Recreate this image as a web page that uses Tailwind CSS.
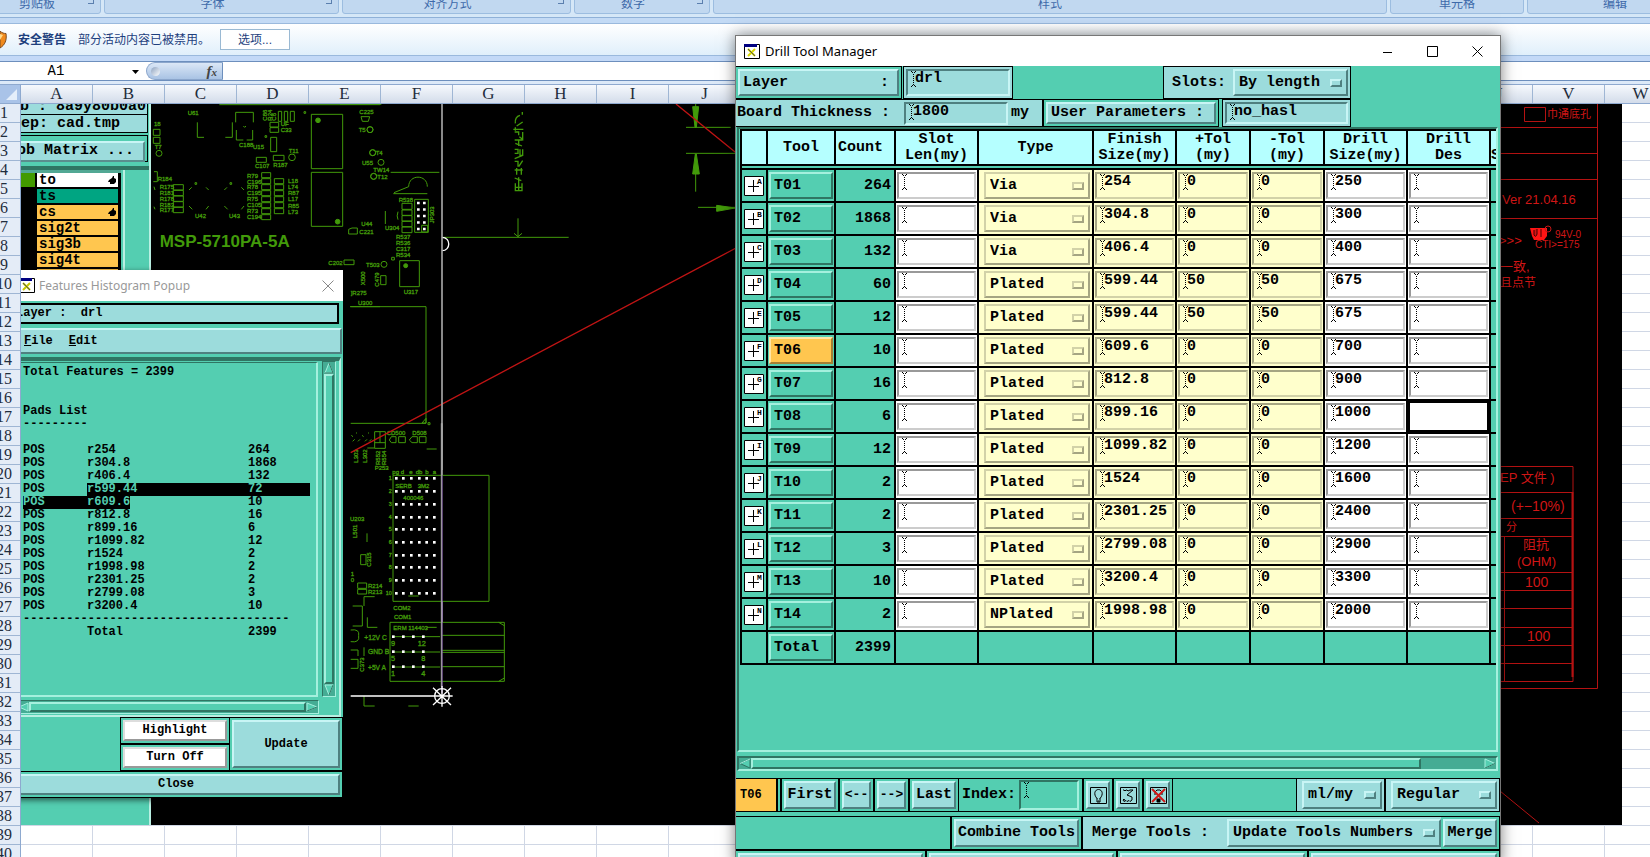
<!DOCTYPE html>
<html lang="zh-CN">
<head>
  <meta charset="utf-8" />
  <title>Drill Tool Manager</title>
  <script src="https://cdn.jsdelivr.net/npm/@tailwindcss/browser@4"></script>
</head>
<body class="relative h-screen flex flex-col overflow-hidden bg-white text-black font-['Liberation_Sans','Noto_Sans_CJK_SC',sans-serif]">

  <!-- Ribbon group captions -->
  <div class="shrink-0 h-[18px] flex gap-[3px] overflow-hidden bg-[#d5e7f7] border-b border-[#8fb1d8] text-[12px] text-[#3e6aaa]">
    <div class="shrink-0 w-[110px] -ml-[9px] h-[21px] -mt-[7px] flex items-center justify-center pr-[18px] relative rounded-b-[3px] border border-[#9cbde0] bg-[#c1d8f0]">剪贴板<i class="absolute right-[6px] bottom-[9px] size-[6px] border-r border-b border-[#5b7fae]"></i></div>
    <div class="shrink-0 w-[235px] h-[21px] -mt-[7px] flex items-center justify-center pr-[18px] relative rounded-b-[3px] border border-[#9cbde0] bg-[#c1d8f0]">字体<i class="absolute right-[6px] bottom-[9px] size-[6px] border-r border-b border-[#5b7fae]"></i></div>
    <div class="shrink-0 w-[229px] h-[21px] -mt-[7px] flex items-center justify-center pr-[18px] relative rounded-b-[3px] border border-[#9cbde0] bg-[#c1d8f0]">对齐方式<i class="absolute right-[6px] bottom-[9px] size-[6px] border-r border-b border-[#5b7fae]"></i></div>
    <div class="shrink-0 w-[136px] h-[21px] -mt-[7px] flex items-center justify-center pr-[18px] relative rounded-b-[3px] border border-[#9cbde0] bg-[#c1d8f0]">数字<i class="absolute right-[6px] bottom-[9px] size-[6px] border-r border-b border-[#5b7fae]"></i></div>
    <div class="flex-1 h-[21px] -mt-[7px] flex items-center justify-center rounded-b-[3px] border border-[#9cbde0] bg-[#c1d8f0]">样式</div>
    <div class="shrink-0 w-[134px] h-[21px] -mt-[7px] flex items-center justify-center rounded-b-[3px] border border-[#9cbde0] bg-[#c1d8f0]">单元格</div>
    <div class="shrink-0 w-[176px] -mr-[53px] h-[21px] -mt-[7px] flex items-center justify-center rounded-b-[3px] border border-[#9cbde0] bg-[#c1d8f0]">编辑</div>
  </div>
  <div class="shrink-0 h-[5px] bg-[#c3daf5]"></div>

  <!-- Security warning -->
  <div class="shrink-0 h-[33px] flex items-center border-y border-[#9ab9dd] bg-linear-to-b from-white to-[#e0effb] text-[12px] text-[#1e3f7d]">
    <svg class="w-[7px] h-[18px]" viewBox="0 0 7 18"><path d="M0 0C2 2 4 2.500 6 2.500C7 9 5 14 0 17Z" fill="#f08a1d" stroke="#7b4a20" /><path d="M0 3 3 4 0 9Z" fill="#ffd98a" /></svg>
    <b class="ml-[11px]">安全警告</b>
    <span class="ml-[12px]">部分活动内容已被禁用。</span>
    <button class="ml-[10px] w-[70px] h-[21px] border border-[#9ab9d3] bg-white">选项...</button>
  </div>
  <div class="shrink-0 h-[5px] bg-[#c3d9f7]"></div>

  <!-- Formula bar -->
  <div class="shrink-0 h-[20px] flex border-y border-[#6d8fbd] bg-white">
    <input aria-label="Name box" value="A1" class="w-[112px] text-center text-[14px] font-['Liberation_Mono',monospace]" />
    <svg class="mt-[7px] ml-[19px] w-[9px] h-[6px]" viewBox="0 0 9 6"><path d="M1 1h7L4.500 5Z" /></svg>
    <div class="ml-[6px] w-[77px] flex items-center justify-between pl-[4px] pr-[5px] rounded-l-full border border-r-[#6d8fbd] border-[#8ba6cc] bg-linear-to-b from-[#dbe7f6] to-[#a9c3e4]">
      <i class="size-[9px] rounded-full bg-linear-to-br from-[#8ea3c0] to-white"></i>
      <i class="font-['Liberation_Serif',serif] text-[15px] leading-[16px] font-bold text-[#444]">f<span class="text-[11px]">x</span></i>
    </div>
    <input aria-label="Formula" class="flex-1 min-w-0" />
  </div>
  <div class="shrink-0 h-[3px] bg-[#dce9f8]"></div>

  <!-- Worksheet -->
  <div class="shrink-0 h-[20px] flex overflow-hidden border-y border-[#8ea9cf] bg-linear-to-b from-[#f6f9fd] to-[#d3dcea] text-[17px] text-[#1f2d3d] font-['Liberation_Serif',serif]" id="colHeads">
    <div class="shrink-0 w-[21px] flex items-end justify-end p-[3px] border-r border-[#8ea9cf] bg-[#a9c3e8]"><svg class="size-[11px]" viewBox="0 0 11 11"><path d="M11 0V11H0Z" fill="#e4eefa" /></svg></div>
  </div>
  <div class="flex-1 min-h-0 flex">
    <div class="shrink-0 w-[21px] overflow-hidden border-r border-[#8ea9cf] bg-[#e4ecf7] text-[16px] text-[#1f2d3d] font-['Liberation_Serif',serif]" id="rowHeads"></div>

    <div class="relative flex-1 min-w-0 overflow-hidden bg-[linear-gradient(transparent_18px,#d0d7e5_18px),linear-gradient(90deg,transparent_71px,#d0d7e5_71px)] bg-[size:72px_19px]">

      <!-- Board picture on the sheet -->
      <div class="relative w-[1601px] h-[721px] overflow-hidden bg-black">
        <svg class="absolute inset-0 size-full" viewBox="21 104 1601 721" fill="none" font-family="Liberation Sans, Noto Sans CJK SC, sans-serif">
          <!-- upper left part of the board -->
          <svg x="0" y="90" width="380" height="330" viewBox="0 0 1140 990" stroke="#429a0a" stroke-width="3">
            <path d="M658 44H1140M592 97V142H612M676 142H697V97M707 97V67H760V97M709 120V150H730M740 150H758V120M730 108l4 4 4-4M934 73H1028V236H934ZM934 247H1028V409H934ZM462 245H472V275H460M460 118h20v18h-20zM460 142h20v18h-20zM810 97h26v14h-26zM810 113h26v14h-26zM812 142h18v43h-18zM769 202h30v15h-30zM820 196h32v16h-32zM835 64h10v30h-10zM853 64h10v30h-10zM871 64h12v30h-12z" />
            <path d="M520 284h30v16h-30zM520 301h30v16h-30zM520 318h30v16h-30zM520 335h30v16h-30zM520 352h30v16h-30zM785 248h27v15h-27zM785 266h27v15h-27zM785 284h27v15h-27zM785 302h27v15h-27zM785 320h27v15h-27zM785 338h27v15h-27zM785 356h27v15h-27zM785 374h27v15h-27zM823 266h28v15h-28zM823 284h28v15h-28zM823 302h28v15h-28zM823 320h28v15h-28zM823 338h28v15h-28zM823 356h28v15h-28z" />
            <path d="M567 300l8-8M618 292l8 8M567 348l10 10M626 348l-8 10M673 300l8-8M724 292l8 8M673 348l10 10M732 348l-8 10M1083 80h26l-4 14h-18zM1046 418l10-4h16v18h-26zM1032 510h30v14h-30zM585 278h5v5h-5zM690 278h5v5h-5zM795 137h5v5h-5zM912 65h5v5h-5zM462 290l3 10M462 350l3 8M1050 650h90" />
            <circle cx="477" cy="190" r="9" /><circle cx="876" cy="202" r="10" /><circle cx="1110" cy="119" r="9" /><circle cx="1118" cy="188" r="9" /><circle cx="1121" cy="259" r="9" />
            <circle cx="954" cy="91" r="7" fill="#429a0a" /><circle cx="1013" cy="395" r="7" fill="#429a0a" />
            <g fill="#429a0a" stroke-width="1" font-size="18">
              <text x="563" y="74">U61</text><text x="462" y="108">18</text><text x="464" y="176">T7</text><text x="842" y="108">UF</text><text x="842" y="127">C33</text><text x="717" y="171">C188</text><text x="759" y="177">U15</text><text x="866" y="188">T11</text><text x="765" y="235">C107</text><text x="820" y="230">R187</text>
              <text x="473" y="273">R184</text><text x="479" y="298">R175</text><text x="479" y="315">R181</text><text x="479" y="333">R178</text><text x="479" y="350">R183</text><text x="479" y="367">R177</text><text x="585" y="383">U42</text><text x="687" y="383">U43</text>
              <text x="741" y="263">R79</text><text x="741" y="281">C196</text><text x="741" y="298">R78</text><text x="741" y="316">C195</text><text x="741" y="334">R75</text><text x="741" y="352">C105</text><text x="741" y="370">R73</text><text x="741" y="388">C194</text>
              <text x="864" y="278">L18</text><text x="864" y="298">L74</text><text x="864" y="315">R87</text><text x="864" y="334">L17</text><text x="864" y="353">R85</text><text x="864" y="371">L73</text>
              <text x="1078" y="72">C225</text><text x="1076" y="125">T5</text><text x="1086" y="225">U55</text><text x="1084" y="407">U44</text><text x="1078" y="431">C221</text><text x="985" y="524">C202</text><text x="1098" y="531">T503</text>
              <text x="800" y="92" transform="rotate(-90 800 92)">C86</text><text x="816" y="92" transform="rotate(-90 816 92)">R24</text><text x="829" y="92" transform="rotate(-90 829 92)">C6</text><text x="1096" y="586" transform="rotate(-90 1096 586)">X500</text>
              <text x="1052" y="616">]R275</text><text x="1074" y="645">U300</text>
            </g>
            <text x="479" y="472" font-size="51" font-weight="bold" fill="#429a0a" stroke="none">MSP-5710PA-5A</text>
          </svg>

          <!-- upper middle part -->
          <svg x="340" y="90" width="400" height="380" viewBox="0 0 1200 1140" stroke="#429a0a" stroke-width="3">
            <path d="M0 43H124M152 247H298M160 311H262M162 308L206 290C206 252 262 252 262 290M136 363V402M174 365q-5 13 0 24M186 340h30v18h-30zM186 360h30v16h-30zM186 377h30v16h-30zM186 394h30v16h-30zM186 411h30v17h-30zM224 328h41v99h-41zM245 406h18v20h-18zM179 512h59v78h-59zM122 557h16v27h-16zM155 502h8v8h-8zM32 650H258V1000H32M258 985l-12 14h12zM264 998h6v6h-6z" />
            <path d="M104 1025h32v50h-32zM104 1058h32M120 1025v33M148 1050l6-10h14v18h-14zM176 1040h20v18h-20zM208 1050l8-10h16v18h-16zM238 1040h20v18h-20zM260 1077H290M82 1074H104M34 1036l5 4M66 1036l5 4M48 1028l3 2M84 1028l3 2M38 1054l6-6M54 1054l6-6M75 1054l6-6M88 1054l6-6" />
            <path d="M309 442H686M534 385V440M522 430l12 10 12-10M1038 112H1172M1038 190H1188M1067 42V110M1067 195V305M1074 352H1188" />
            <path d="M1058 50h18l-7 62h-4zM1066 192h3l9 60h-20zM1130 346l56 8-56 10z" fill="#429a0a" />
            <path d="M547 66v8M520 118h30M526 112v10M540 76q-16 4-14 24M548 96l-18 12M524 126h12v10M548 126v22l-10-8M524 150h24M526 160l20 8M536 152v16M524 178h10v12h-10M540 178v18h8v-18M524 206l24-10M524 214h10v16M548 212l-12 18M524 240h24M530 234v20M544 234v20M524 264l20 8M526 280v22M536 262v40M546 280v22M524 302h24M526 292h20" stroke-width="4" />
            <circle cx="90" cy="119" r="9" /><circle cx="98" cy="188" r="9" /><circle cx="123" cy="217" r="9" /><circle cx="101" cy="259" r="9" /><circle cx="132" cy="523" r="9" /><circle cx="197" cy="527" r="6" fill="#429a0a" />
            <g fill="#429a0a" stroke-width="1" font-size="18">
              <text x="107" y="196">T4</text><text x="100" y="245">TW14</text><text x="112" y="266">T12</text><text x="176" y="336">R538</text><text x="135" y="420">U304</text><text x="168" y="446">R537</text><text x="168" y="464">R536</text><text x="168" y="482">C317</text><text x="168" y="500">R534</text><text x="191" y="612">U317</text><text x="140" y="1035">CD500</text><text x="217" y="1035">D508</text><text x="104" y="1139">P253</text>
              <text x="282" y="400" transform="rotate(-90 282 400)">JP303</text><text x="118" y="590" transform="rotate(-90 118 590)">C479</text><text x="54" y="1118" transform="rotate(-90 54 1118)">L303</text><text x="80" y="1118" transform="rotate(-90 80 1118)">L302</text><text x="120" y="1125" transform="rotate(-90 120 1125)">R552</text><text x="139" y="1125" transform="rotate(-90 139 1125)">R554</text>
            </g>
            <g stroke="#fff" stroke-width="8" stroke-dasharray="8 11.500"><path d="M235 335V425M253 335V425" /></g>
            <g stroke="#c01414" stroke-width="4"><path d="M1008 42 1188 188M1188 474 32 1088" /></g>
            <path d="M306 442C333 442 333 482 306 482" stroke="#fff" stroke-width="4" />
            <path d="M306 42V1140" stroke="#a5a5a5" stroke-width="5" />
          </svg>

          <!-- connectors at the bottom of the board -->
          <svg x="340" y="400" width="300" height="320" viewBox="0 0 900 960" stroke="#429a0a" stroke-width="3">
            <path d="M159 226H447V604H159ZM150 667H493V844H150ZM159 710H300M159 756H300M159 801H300M306 706H493M306 751H493M306 757H493M306 800H493M476 667l17 10M476 844l17-10M260 682H290M205 588H236M72 618V590H104M38 618H67V678H38M82 652V682H112M32 690q28-4 24 17q4 22-24 18M32 750H54V768M72 742V768M32 778H54V805H32M72 888V918H104M205 918H236M81 400V426M62 464h16v30h-16zM53 549h27v16h-27zM53 568h27v14h-27z" />
            <g fill="#429a0a" stroke-width="1" font-size="18">
              <text x="157" y="221">pg d</text><text x="208" y="221">e</text><text x="227" y="221">db</text><text x="256" y="221">b</text><text x="278" y="221">a</text><text x="166" y="263">SERB</text><text x="233" y="263">3M2</text><text x="190" y="301">400046</text>
              <text x="30" y="362">U203</text><text x="160" y="629">COM2</text><text x="162" y="658">COM1</text><text x="160" y="691">ERM 114403</text><text x="84" y="563">R214</text><text x="84" y="582">R213</text><text x="32" y="546">0</text><text x="32" y="527">1</text>
              <text x="50" y="414" transform="rotate(-90 50 414)">L501</text><text x="94" y="500" transform="rotate(-90 94 500)">C315</text><text x="73" y="815" transform="rotate(-90 73 815)">C373</text>
            </g>
            <g fill="#429a0a" stroke-width="1" font-size="16" id="pinRows"></g>
            <g fill="#429a0a" stroke-width="1" font-size="22">
              <text x="153" y="739">9</text><text x="233" y="739">12</text><text x="153" y="784">5</text><text x="244" y="784">8</text><text x="153" y="829">1</text><text x="244" y="829">4</text>
              <text x="73" y="721" font-size="20">+12V C</text><text x="84" y="763" font-size="20">GND B</text><text x="84" y="809" font-size="20">+5V A</text>
            </g>
            <g fill="#fff" stroke="none" id="pins"></g>
            <path d="M306 70V226M306 604V667" stroke="#a5a5a5" stroke-width="5" />
            <path d="M306 226V880" stroke="#8d6ab0" stroke-width="4" />
            <path d="M304 70V860" stroke="#a5a5a5" stroke-width="3" />
            <g stroke="#fff" stroke-width="4"><path d="M32 888H338M306 858V920M279 863 333 915M333 863 279 915" /><circle cx="306" cy="888" r="22" /></g>
          </svg>

          <!-- drawing frame right of the tool window -->
          <g stroke="#b51212" stroke-width="1">
            <path d="M1597.500 104V688.500H1500M1500 127.500H1597M1500 153.500H1597M1500 179.500H1597M1500 218.500H1597M1524.500 107.500h21v14h-21z" />
            <path d="M1500 466.500H1573V492M1500 492.500H1573M1500 518.500H1573M1500 536.500H1573M1500 572.500H1573M1500 590.500H1573M1500 608.500H1573M1500 627.500H1573M1500 645.500H1573M1500 663.500H1573M1500 681.500H1573V492M1504.500 536V681M1500 791 1539 823" />
            <path d="M1572.500 492V677" stroke-width="2" />
          </g>
          <g fill="#d01616">
            <text x="1547" y="118" font-size="11">巾通底孔</text>
            <text x="1502" y="204" font-size="13">Ver 21.04.16</text>
            <text x="1499" y="245" font-size="13">&gt;&gt;&gt;</text>
            <path d="M1530 228h17v8l-3 4h-10l-2-4z" fill="#ff1414" /><path d="M1534 230v5q2 3 3-1v-5M1541 229v8" stroke="#400" />
            <circle cx="1548" cy="229" r="3" stroke="#c41616" fill="none" />
            <text x="1555" y="238" font-size="10">94V-0</text>
            <text x="1535" y="248" font-size="10">CTI&gt;=175</text>
            <text x="1500" y="271" font-size="13">一致,</text>
            <text x="1500" y="287" font-size="12">且点节</text>
            <text x="1500" y="482" font-size="13">EP 文件 )</text>
            <text x="1511" y="511" font-size="14">(+−10%)</text>
            <text x="1506" y="531" font-size="11">分</text>
            <text x="1523" y="549" font-size="13">阻抗</text>
            <text x="1517" y="566" font-size="13">(OHM)</text>
            <text x="1525" y="587" font-size="14">100</text>
            <text x="1527" y="641" font-size="14">100</text>
          </g>
        </svg>

        <!-- Layer panel of the CAM program -->
        <div class="absolute left-0 top-0 w-[130px] h-full bg-[#54ceb1] border-r-2 border-[#b9efe2] overflow-hidden whitespace-nowrap font-['Liberation_Mono',monospace] font-bold">
          <div class="mr-px h-[10px] flex items-end justify-end bg-[#9cdcdc] border-r border-black text-[15px] leading-[14px] pr-px">b : 8a9y80b0a0</div>
          <div class="mr-px h-[19px] flex items-center bg-[#9cdcdc] border-y border-r border-black text-[15px] leading-[16px]">ep: cad.tmp</div>
          <div class="mt-[2px] mr-px h-[27px] p-[2px] pl-0 border-y border-r border-black">
            <button class="w-full h-full text-left -indent-[4px] bg-[#9cdcdc] border-2 border-l-0 border-t-[#c8f5f5] border-r-[#5a8e8e] border-b-[#5a8e8e] text-[15px] leading-[16px]">ob Matrix ...</button>
          </div>
          <div class="mt-[4px] h-[4px] bg-[#2f7563]"></div>
          <div class="flex">
            <div class="w-[100px] h-[120px] bg-black border-t-[3px] border-[#52a894] text-[14px] leading-[14px]">
              <div class="flex h-[16px]"><i class="w-[14px] h-[14px] mr-[2px] bg-[#429a00]"></i><span class="flex w-[81px] h-[14px] pl-[2px] pr-[2px] items-center justify-between bg-white">to<svg class="w-[8px] h-[8px]" viewBox="0 0 8 8"><path d="M1 4l3-2 1-2h1v2l2 1v3L6 8H2V6H0z" /></svg></span></div>
              <div class="ml-[16px] mb-[2px] w-[81px] h-[14px] pl-[2px] bg-[#00a582]">ts</div>
              <div class="ml-[16px] mb-[2px] w-[81px] h-[14px] pl-[2px] pr-[2px] flex items-center justify-between bg-[#ffc64f]">cs<svg class="w-[8px] h-[8px]" viewBox="0 0 8 8"><path d="M1 4l3-2 1-2h1v2l2 1v3L6 8H2V6H0z" /></svg></div>
              <div class="ml-[16px] mb-[2px] w-[81px] h-[14px] pl-[2px] bg-[#ffc64f]">sig2t</div>
              <div class="ml-[16px] mb-[2px] w-[81px] h-[14px] pl-[2px] bg-[#ffc64f]">sig3b</div>
              <div class="ml-[16px] mb-[2px] w-[81px] h-[14px] pl-[2px] bg-[#ffc64f]">sig4t</div>
              <div class="ml-[16px] w-[81px] h-[14px] bg-[#ffc64f]"></div>
            </div>
            <i class="ml-[2px] w-[2px] h-[120px] bg-[#b9efe2]"></i>
          </div>
        </div>

        <!-- Features Histogram Popup -->
        <section class="absolute -left-[8px] top-[166px] w-[330px] bg-[#54ceb1] shadow-[0_2px_6px_rgba(0,0,0,0.6)] font-['Liberation_Mono',monospace] font-bold text-[12px] leading-[13px]">
          <header class="h-[31px] flex items-center bg-white pl-[6px] pr-[9px] font-['Noto_Sans',sans-serif] font-normal text-[#999]">
            <svg class="w-[16px] h-[15px]" viewBox="0 0 16 15"><path d="M.5.500h15v14H.5z" fill="#fff" stroke="#000" /><path d="M0 0h13v3H0z" fill="#000080" /><path d="M4 5l7 7M11 5 4 12" stroke="#c8c800" stroke-width="2" /><path d="M4 5l7 7" stroke="#555" /></svg>
            <span class="ml-[4px] text-[12px]">Features Histogram Popup</span>
            <button class="ml-auto" aria-label="Close"><svg class="size-[12px]" viewBox="0 0 12 12"><path d="M.5.500l11 11M11.500.500l-11 11" stroke="#888" /></svg></button>
          </header>
          <div class="mt-[2px] mr-[4px] h-[21px] flex items-center border-2 border-black bg-[#9cdcdc] pl-px whitespace-pre">Layer :  drl</div>
          <div class="mt-[4px] h-[26px] mr-px flex items-center gap-[16px] pl-[11px] bg-[#9cdcdc] border-2 border-t-[#c8f5f5] border-l-0 border-r-[#4f8080] border-b-[#4f8080]">
            <button class="first-letter:underline">File</button>
            <button class="first-letter:underline">Edit</button>
          </div>
          <div class="mt-[3px] mr-[2px] border-t-4 border-r-2 border-b-2 border-t-[#2f7563] border-r-[#b9efe2] border-b-[#b9efe2] pr-[3px]">
            <div class="flex">
              <div class="w-[305px] h-[335px] mt-[1px] pt-[3px] pl-[10px] border-t border-r-2 border-b-2 border-t-[#2f7563] border-r-[#a5f0de] border-b-[#a5f0de]">
                <p>Total Features = 2399</p>
                <p class="mt-[26px]">Pads List</p>
                <p>---------</p>
                <table class="mt-[13px] table-fixed w-[287px] border-collapse">
                  <colgroup><col class="w-[64px]" /><col class="w-[161px]" /><col /></colgroup>
                  <tbody id="pads"></tbody>
                </table>
                <p>-------------------------------------</p>
                <p class="flex"><span class="w-[161px] ml-[64px]">Total</span>2399</p>
              </div>
              <div class="ml-auto w-[14px] h-[336px] flex flex-col items-center bg-[#45ac94] border border-t-[#2f7563] border-l-[#2f7563] border-r-[#a5f0de] border-b-[#a5f0de]">
                <svg class="w-[10px] h-[12px]" viewBox="0 0 10 12"><path d="M5 1 9 11H1Z" fill="#54ceb1" stroke="#a5f0de" /><path d="M5 1 9 11H1" fill="none" stroke="#2f7563" /></svg>
                <i class="flex-1 w-[10px] bg-[#54ceb1] border-2 border-t-[#a5f0de] border-l-[#a5f0de] border-r-[#2f7563] border-b-[#2f7563]"></i>
                <svg class="w-[10px] h-[12px]" viewBox="0 0 10 12"><path d="M5 11 9 1H1Z" fill="#54ceb1" stroke="#a5f0de" /><path d="M5 11 9 1" stroke="#2f7563" /></svg>
              </div>
            </div>
            <div class="mt-[3px] mb-px w-[306px] h-[14px] flex items-center pl-[5px] bg-[#45ac94] border border-t-[#2f7563] border-l-0 border-r-[#a5f0de] border-b-[#a5f0de]">
              <svg class="w-[11px] h-[10px]" viewBox="0 0 11 10"><path d="M1 5 10 1V9Z" fill="#54ceb1" stroke="#a5f0de" /></svg>
              <i class="flex-1 h-[10px] bg-[#54ceb1] border-2 border-t-[#a5f0de] border-l-[#a5f0de] border-r-[#2f7563] border-b-[#2f7563]"></i>
              <svg class="w-[12px] h-[10px]" viewBox="0 0 12 10"><path d="M11 5 1 1V9Z" fill="#54ceb1" stroke="#a5f0de" /><path d="M1 9 11 5" stroke="#2f7563" /></svg>
            </div>
          </div>
          <div class="flex h-[54px] justify-end">
            <div class="w-[110px] flex flex-col border border-black">
              <div class="flex-1 p-[2px]"><button class="size-full bg-white border-2 border-t-[#ddd] border-l-[#ddd] border-r-[#999] border-b-[#999]">Highlight</button></div>
              <div class="flex-1 p-[2px] border-t-2 border-black"><button class="size-full bg-white border-2 border-t-[#ddd] border-l-[#ddd] border-r-[#999] border-b-[#999]">Turn Off</button></div>
            </div>
            <div class="w-[113px] p-[2px] border border-l-0 border-black"><button class="size-full bg-[#9cdcdc] border-2 border-t-[#c8f5f5] border-l-[#c8f5f5] border-r-[#4f8080] border-b-[#4f8080]">Update</button></div>
          </div>
          <div class="h-[27px] p-[2px] border border-black"><button class="size-full pr-[4px] bg-[#9cdcdc] border-2 border-t-[#c8f5f5] border-l-[#c8f5f5] border-r-[#4f8080] border-b-[#4f8080]">Close</button></div>
        </section>
      </div>
    </div>
  </div>

  <!-- Drill Tool Manager -->
  <main class="absolute left-[735px] top-[35px] w-[766px] h-[830px] bg-[#54ceb1] border border-[#777] shadow-[0_0_14px_rgba(0,0,0,0.5)] font-['Liberation_Mono',monospace] font-bold text-[15px] leading-[16px] whitespace-nowrap">
    <header class="h-[30px] flex items-center bg-white pl-[8px] pr-[17px] font-['Noto_Sans',sans-serif] font-normal text-[13px]">
      <svg class="w-[16px] h-[15px]" viewBox="0 0 16 15"><path d="M.5.500h15v14H.5z" fill="#fff" stroke="#000" /><path d="M0 0h13v3H0z" fill="#000080" /><path d="M4 5l7 7M11 5 4 12" stroke="#d8d800" stroke-width="2" /><path d="M4 5l7 7" stroke="#555" /></svg>
      <span class="ml-[5px]">Drill Tool Manager</span>
      <div class="ml-auto flex items-center gap-[34px]">
        <button aria-label="Minimize"><svg class="size-[11px]" viewBox="0 0 11 11"><path d="M1 6.500h9" stroke="#000" /></svg></button>
        <button aria-label="Maximize"><svg class="size-[11px]" viewBox="0 0 11 11"><path d="M.5.500h10v10H.5z" fill="none" stroke="#000" /></svg></button>
        <button aria-label="Close"><svg class="size-[11px]" viewBox="0 0 11 11"><path d="M.5.500l10 10M10.500.500l-10 10" stroke="#000" /></svg></button>
      </div>
    </header>

    <div class="h-[33px] flex">
      <div class="w-[166px] p-[2px] border border-l-0 border-black"><button class="size-full flex items-center gap-[92px] pl-[3px] bg-[#9cdcdc] border-2 border-t-[#c8f5f5] border-l-[#c8f5f5] border-r-[#4f8080] border-b-[#4f8080]"><span>Layer</span>:</button></div>
      <div class="ml-px w-[110px] p-[2px] border border-black bg-[#9cdcdc]">
        <div class="size-full flex items-start border-2 border-t-[#4f8080] border-l-[#4f8080] border-r-[#c8f5f5] border-b-[#c8f5f5] pl-[3px]">
          <svg class="shrink-0 w-[5px] h-[16px]" viewBox="0 0 5 16"><path d="M0 .5h1m3 0h1M1 1.500h1m1 0h1M1 14.500h1m1 0h1M0 15.500h1m3 0h1M2.500 3V14" stroke="#000" stroke-dasharray="1 1" /></svg>
          <input aria-label="Layer name" value="drl" class="-ml-px w-full h-[16px] min-w-0" />
        </div>
      </div>
      <label class="ml-[150px] w-[188px] flex items-center p-[2px] pl-[8px] border border-black bg-[#9cdcdc]">Slots:
        <span class="ml-auto w-[115px] h-full flex items-center px-[4px] border-2 border-t-[#c8f5f5] border-l-[#c8f5f5] border-r-[#4f8080] border-b-[#4f8080]">
          <select class="flex-1 min-w-0 appearance-none"><option>By length</option></select>
          <i class="w-[12px] h-[8px] border-2 border-t-[#c8f5f5] border-l-[#c8f5f5] border-r-[#4f8080] border-b-[#4f8080]"></i>
        </span>
      </label>
    </div>
    <div class="h-[28px] flex">
      <div class="w-[307px] flex items-center pl-px border border-l-0 border-black bg-[#9cdcdc]">
        <label for="thickness">Board Thickness :</label>
        <div class="ml-[14px] w-[104px] h-[23px] flex items-start border-2 border-t-[#4f8080] border-l-[#4f8080] border-r-[#c8f5f5] border-b-[#c8f5f5] pl-[3px]">
          <svg class="shrink-0 w-[5px] h-[16px]" viewBox="0 0 5 16"><path d="M0 .5h1m3 0h1M1 1.500h1m1 0h1M1 14.500h1m1 0h1M0 15.500h1m3 0h1M2.500 3V14" stroke="#000" stroke-dasharray="1 1" /></svg>
          <input id="thickness" value="1800" class="-ml-px w-full h-[16px] min-w-0" />
        </div>
        <span class="ml-[3px]">my</span>
      </div>
      <div class="w-[176px] p-[2px] border border-black"><button class="size-full text-left pl-[3px] bg-[#9cdcdc] border-2 border-t-[#c8f5f5] border-l-[#c8f5f5] border-r-[#4f8080] border-b-[#4f8080]">User Parameters :</button></div>
      <div class="ml-[3px] w-[129px] p-[2px] border border-black bg-[#9cdcdc]">
        <div class="size-full flex items-start border-2 border-t-[#4f8080] border-l-[#4f8080] border-r-[#c8f5f5] border-b-[#c8f5f5] pl-[3px]">
          <svg class="shrink-0 w-[5px] h-[16px]" viewBox="0 0 5 16"><path d="M0 .5h1m3 0h1M1 1.500h1m1 0h1M1 14.500h1m1 0h1M0 15.500h1m3 0h1M2.500 3V14" stroke="#000" stroke-dasharray="1 1" /></svg>
          <input aria-label="User parameter" value="no_hasl" class="-ml-px w-full h-[16px] min-w-0" />
        </div>
      </div>
    </div>

    <div class="ml-px mr-[2px] h-[625px] overflow-hidden border-2 border-t-[#2f7563] border-l-[#2f7563] border-r-[#a5f0de] border-b-[#a5f0de]">
      <table class="ml-px w-[759px] table-fixed border-separate border-spacing-[2px] bg-black">
        <colgroup>
          <col class="w-[24px]" /><col class="w-[66px]" /><col class="w-[58px]" /><col class="w-[81px]" /><col class="w-[113px]" /><col class="w-[81px]" /><col class="w-[72px]" /><col class="w-[72px]" /><col class="w-[81px]" /><col class="w-[81px]" /><col class="w-[6px]" />
        </colgroup>
        <thead>
          <tr class="h-[33px] bg-[#b5ffff]">
            <th class="p-0"></th><th class="p-0">Tool</th><th class="p-0 text-left pl-[2px]">Count</th><th class="p-0">Slot<br />Len(my)</th><th class="p-0">Type</th><th class="p-0">Finish<br />Size(my)</th><th class="p-0">+Tol<br />(my)</th><th class="p-0">-Tol<br />(my)</th><th class="p-0">Drill<br />Size(my)</th><th class="p-0">Drill<br />Des</th><th class="p-0 text-left overflow-hidden"><br />S</th>
          </tr>
          <tr class="h-[2px]"><td colspan="11" class="p-0 bg-[#54ceb1]"></td></tr>
        </thead>
        <tbody id="tools"></tbody>
      </table>
    </div>

    <div class="mt-[4px] ml-px mr-[2px] h-[15px] flex items-center bg-[#45ac94] border-2 border-t-[#2f7563] border-l-[#2f7563] border-r-[#a5f0de] border-b-[#a5f0de]">
      <svg class="w-[12px] h-[11px]" viewBox="0 0 12 11"><path d="M1 5.500 11 1V10Z" fill="#54ceb1" stroke="#2f7563" /><path d="M1 5.500 11 1" stroke="#a5f0de" /></svg>
      <i class="w-[670px] h-[11px] bg-[#54ceb1] border-2 border-t-[#a5f0de] border-l-[#a5f0de] border-r-[#2f7563] border-b-[#2f7563]"></i>
      <svg class="ml-auto w-[12px] h-[11px]" viewBox="0 0 12 11"><path d="M11 5.500 1 1V10Z" fill="#54ceb1" stroke="#a5f0de" /><path d="M1 10 11 5.500" stroke="#2f7563" /></svg>
    </div>

    <div class="mt-[7px] h-[34px] flex border-y border-black">
      <div class="w-[42px] flex items-center pl-[4px] bg-[#ffc64f] border-r-2 border-black text-[12px]">T06</div>
      <div class="ml-[2px] flex border-l-2 border-black">
        <div class="w-[58px] p-[2px] border-r-2 border-black"><button class="size-full bg-[#9cdcdc] border-2 border-t-[#c8f5f5] border-l-[#c8f5f5] border-r-[#4f8080] border-b-[#4f8080]">First</button></div>
        <div class="w-[35px] p-[2px] border-r-2 border-black"><button class="size-full bg-[#9cdcdc] border-2 border-t-[#c8f5f5] border-l-[#c8f5f5] border-r-[#4f8080] border-b-[#4f8080] text-[13px]">&lt;--</button></div>
        <div class="w-[35px] p-[2px] border-r-2 border-black"><button class="size-full bg-[#9cdcdc] border-2 border-t-[#c8f5f5] border-l-[#c8f5f5] border-r-[#4f8080] border-b-[#4f8080] text-[13px]">--&gt;</button></div>
        <div class="w-[49px] p-[2px] border-r border-black"><button class="size-full bg-[#9cdcdc] border-2 border-t-[#c8f5f5] border-l-[#c8f5f5] border-r-[#4f8080] border-b-[#4f8080]">Last</button></div>
      </div>
      <label for="index" class="pl-[3px] self-center">Index:</label>
      <div class="ml-[3px] my-px w-[60px] flex items-start border-2 border-t-[#2f7563] border-l-[#2f7563] border-r-[#a5f0de] border-b-[#a5f0de] pl-[3px]">
        <svg class="shrink-0 w-[5px] h-[16px]" viewBox="0 0 5 16"><path d="M0 .5h1m3 0h1M1 1.500h1m1 0h1M1 14.500h1m1 0h1M0 15.500h1m3 0h1M2.500 3V14" stroke="#000" stroke-dasharray="1 1" /></svg>
        <input id="index" class="w-full min-w-0 h-[16px]" />
      </div>
      <div class="ml-[3px] flex border-l-2 border-black">
        <div class="w-[30px] p-[2px] border-r-2 border-black"><button aria-label="Highlight" class="size-full grid place-items-center bg-[#9cdcdc] border-2 border-t-[#c8f5f5] border-l-[#c8f5f5] border-r-[#4f8080] border-b-[#4f8080]"><svg class="size-[17px]" viewBox="0 0 17 17" fill="none" stroke="#000"><path d="M.5.500h16v16H.5zM7 11.500C3 7 5 2.500 8.500 2.500S14 7 10 11.500M7 11v4h3v-4M8 14h1" /></svg></button></div>
        <div class="w-[30px] p-[2px] border-r-2 border-black"><button aria-label="Undo" class="size-full grid place-items-center bg-[#9cdcdc] border-2 border-t-[#c8f5f5] border-l-[#c8f5f5] border-r-[#4f8080] border-b-[#4f8080]"><svg class="size-[17px]" viewBox="0 0 17 17" fill="none" stroke="#000"><path d="M.5.500h16v16H.5zM3 3h1l1 1 1-1h1l1 1 2-1h3L7 8l5 2v3l-2 1.500-1-1-2 1-1-1-2 1-1-1.500 1-1 1 1.500" /></svg></button></div>
        <div class="w-[29px] p-[2px] border-r border-black"><button aria-label="Delete" class="size-full grid place-items-center bg-[#9cdcdc] border-2 border-t-[#c8f5f5] border-l-[#c8f5f5] border-r-[#4f8080] border-b-[#4f8080]"><svg class="size-[17px]" viewBox="0 0 17 17" fill="none" stroke="#000"><path d="M.5.500h16v16H.5zM5 8V5l2-2h3l2 2v3" /><path d="M7 12h3v3H7z" fill="#000" /><path d="M2 2l13 13M15 2 2 15" stroke="#d01818" stroke-width="2" /></svg></button></div>
      </div>
      <label class="ml-auto w-[89px] flex p-[2px] pl-[5px] bg-[#9cdcdc] border-x border-black">
        <span class="flex-1 min-w-0 flex items-center px-[4px] border-2 border-t-[#c8f5f5] border-l-[#c8f5f5] border-r-[#4f8080] border-b-[#4f8080]">
          <select aria-label="Units" class="flex-1 min-w-0 appearance-none"><option>ml/my</option></select>
          <i class="w-[12px] h-[8px] border-2 border-t-[#c8f5f5] border-l-[#c8f5f5] border-r-[#4f8080] border-b-[#4f8080]"></i>
        </span>
      </label>
      <label class="w-[115px] flex p-[2px] pl-[5px] bg-[#9cdcdc] border-x border-black">
        <span class="flex-1 min-w-0 flex items-center px-[4px] border-2 border-t-[#c8f5f5] border-l-[#c8f5f5] border-r-[#4f8080] border-b-[#4f8080]">
          <select aria-label="Mode" class="flex-1 min-w-0 appearance-none"><option>Regular</option></select>
          <i class="w-[12px] h-[8px] border-2 border-t-[#c8f5f5] border-l-[#c8f5f5] border-r-[#4f8080] border-b-[#4f8080]"></i>
        </span>
      </label>
    </div>

    <div class="mt-[4px] h-[34px] flex justify-end border-y border-black">
      <div class="w-[133px] p-[2px] border-x-2 border-black"><button class="size-full bg-[#9cdcdc] border-2 border-t-[#c8f5f5] border-l-[#c8f5f5] border-r-[#4f8080] border-b-[#4f8080]">Combine Tools</button></div>
      <label class="w-[358px] flex items-center p-[2px] pl-[9px] pr-0 bg-[#9cdcdc]">Merge Tools :
        <span class="ml-auto w-[214px] h-full flex items-center px-[4px] border-2 border-t-[#c8f5f5] border-l-[#c8f5f5] border-r-[#4f8080] border-b-[#4f8080]">
          <select class="flex-1 min-w-0 appearance-none"><option>Update Tools Numbers</option></select>
          <i class="w-[12px] h-[8px] border-2 border-t-[#c8f5f5] border-l-[#c8f5f5] border-r-[#4f8080] border-b-[#4f8080]"></i>
        </span>
      </label>
      <div class="w-[59px] p-[2px] border-r border-black"><button class="size-full bg-[#9cdcdc] border-2 border-t-[#c8f5f5] border-l-[#c8f5f5] border-r-[#4f8080] border-b-[#4f8080]">Merge</button></div>
    </div>
    <div class="h-[20px] grid grid-cols-4">
      <div class="p-[2px] pb-0 border-r-2 border-t border-black"><div class="size-full bg-[#9cdcdc] border-2 border-[#c8f5f5] border-r-[#4f8080]"></div></div>
      <div class="p-[2px] pb-0 border-r-2 border-t border-black"><div class="size-full bg-[#9cdcdc] border-2 border-[#c8f5f5] border-r-[#4f8080]"></div></div>
      <div class="p-[2px] pb-0 border-r-2 border-t border-black"><div class="size-full bg-[#9cdcdc] border-2 border-[#c8f5f5] border-r-[#4f8080]"></div></div>
      <div class="p-[2px] pb-0 border-r border-t border-black"><div class="size-full bg-[#9cdcdc] border-2 border-[#c8f5f5] border-r-[#4f8080]"></div></div>
    </div>
  </main>

  <script>
    // sheet headers
    document.getElementById('colHeads').insertAdjacentHTML('beforeend', 'ABCDEFGHIJKLMNOPQRSTUVW'.split('').map(c =>
      `<div class="shrink-0 w-[72px] flex items-center justify-center border-r border-[#9fb6d4]">${c}</div>`).join(''));
    let rowHtml = '';
    for (let i = 1; i <= 40; i++) {
      rowHtml += `<div class="-ml-[12px] w-[32px] h-[19px] flex items-center justify-center border-b border-[#9fb6d4]">${i}</div>`;
    }
    document.getElementById('rowHeads').innerHTML = rowHtml;

    // connector pins
    const pinX = [169, 190, 214, 238, 260, 283];
    const pinY = [235, 274, 313, 352, 388, 427, 466, 502, 541, 580];
    document.getElementById('pins').innerHTML =
      pinY.map(y => pinX.map(x => `<rect x="${x - 4}" y="${y - 4}" width="8" height="8"/>`).join('')).join('') +
      [710, 755, 800].map(y => [160, 190, 220, 250].map(x => `<rect x="${x - 4}" y="${y - 4}" width="8" height="8"/>`).join('')).join('');
    document.getElementById('pinRows').innerHTML = pinY.map((y, i) => `<text x="155" y="${y + 5}" text-anchor="end">${i + 1}</text>`).join('');

    // histogram
    const pads = [
      ['r254', 264], ['r304.8', 1868], ['r406.4', 132], ['r599.44', 72], ['r609.6', 10], ['r812.8', 16], ['r899.16', 6],
      ['r1099.82', 12], ['r1524', 2], ['r1998.98', 2], ['r2301.25', 2], ['r2799.08', 3], ['r3200.4', 10]
    ];
    document.getElementById('pads').innerHTML = pads.map(([size, n], i) => {
      const hit = i === 3 ? 'bg-black text-[#54ceb1]' : '';
      const pos = i === 4 ? 'bg-black text-[#54ceb1]' : '';
      return `<tr class="h-[13px]"><td class="p-0 ${pos}">POS</td><td class="p-0 ${hit}"><span class="inline-block h-[13px] align-top ${pos}">${size}</span></td><td class="p-0 ${hit}">${n}</td></tr>`;
    }).join('');

    // drill tools: count, type, finish size, tolerance, drill size
    const tools = [
      [264, 'Via', '254', 0, 250], [1868, 'Via', '304.8', 0, 300], [132, 'Via', '406.4', 0, 400],
      [60, 'Plated', '599.44', 50, 675], [12, 'Plated', '599.44', 50, 675], [10, 'Plated', '609.6', 0, 700],
      [16, 'Plated', '812.8', 0, 900], [6, 'Plated', '899.16', 0, 1000], [12, 'Plated', '1099.82', 0, 1200],
      [2, 'Plated', '1524', 0, 1600], [2, 'Plated', '2301.25', 0, 2400], [3, 'Plated', '2799.08', 0, 2900],
      [10, 'Plated', '3200.4', 0, 3300], [2, 'NPlated', '1998.98', 0, 2000]
    ];
    const caret = '<svg class="shrink-0 w-[5px] h-[16px]" viewBox="0 0 5 16"><path d="M0 .5h1m3 0h1M1 1.500h1m1 0h1M1 14.500h1m1 0h1M0 15.500h1m3 0h1M2.500 3V14" stroke="#000" stroke-dasharray="1 1"/></svg>';
    const whiteBox = (label, v) => `<td class="p-px bg-white"><div class="h-[27px] flex items-start pl-[3px] border-2 border-t-[#999] border-l-[#999] border-r-[#ccc] border-b-[#ccc]">${caret}<input aria-label="${label}" value="${v}" class="-ml-px w-full min-w-0 h-[15px]"/></div></td>`;
    const yellowBox = (label, v) => `<td class="p-px bg-[#ffffcc]"><div class="h-[27px] flex items-start pl-[3px] border-2 border-t-[#a5a582] border-l-[#a5a582] border-r-[#d2d2a8] border-b-[#d2d2a8]">${caret}<input aria-label="${label}" value="${v}" class="-ml-px w-full min-w-0 h-[15px]"/></div></td>`;

    document.getElementById('tools').innerHTML = tools.map(([count, type, finish, tol, drill], i) => {
      const name = 'T' + String(i + 1).padStart(2, '0');
      const btn = i === 5
        ? 'bg-[#ffc64f] border-t-[#ffe5a5] border-l-[#ffe5a5] border-r-[#a57f33] border-b-[#a57f33]'
        : 'bg-[#54ceb1] border-t-[#a5f0de] border-l-[#a5f0de] border-r-[#2f7563] border-b-[#2f7563]';
      const des = i === 7
        ? '<td class="p-0 bg-white"><input aria-label="' + name + ' des" class="block w-full h-[31px] border-2 border-black"/></td>'
        : whiteBox(name + ' des', '');
      return `<tr class="h-[31px] bg-[#54ceb1]">
        <td class="p-0"><svg class="mx-auto size-[20px] bg-white" viewBox="0 0 20 20"><path d="M.5.500h19v19H.5zM9.500 4v12M4 10.500h11" fill="none" stroke="#000"/><text x="13" y="8" font-size="8">${String.fromCharCode(65 + i)}</text></svg></td>
        <td class="p-px"><button class="w-full h-[27px] text-left pl-[3px] border-2 ${btn}">${name}</button></td>
        <td class="p-0 pr-[3px] text-right">${count}</td>
        ${whiteBox(name + ' slot length', '')}
        <td class="p-px pl-[5px] pr-[2px] bg-[#ffffcc]"><div class="h-[27px] flex items-center px-[4px] border-2 border-t-[#d2d2a8] border-l-[#d2d2a8] border-r-[#a5a582] border-b-[#a5a582]"><select aria-label="${name} type" class="flex-1 min-w-0 appearance-none"><option>${type}</option></select><i class="w-[12px] h-[8px] border-2 border-t-[#d2d2a8] border-l-[#d2d2a8] border-r-[#a5a582] border-b-[#a5a582]"></i></div></td>
        ${yellowBox(name + ' finish size', finish)}${yellowBox(name + ' plus tolerance', tol)}${yellowBox(name + ' minus tolerance', tol)}
        ${whiteBox(name + ' drill size', drill)}${des}<td class="p-0"></td></tr>`;
    }).join('') + `<tr class="h-[31px] bg-[#54ceb1]"><td class="p-0"></td>
        <td class="p-px"><button class="w-full h-[27px] text-left pl-[3px] bg-[#54ceb1] border-2 border-t-[#a5f0de] border-l-[#a5f0de] border-r-[#2f7563] border-b-[#2f7563]">Total</button></td>
        <td class="p-0 pr-[3px] text-right">2399</td>` + '<td class="p-0"></td>'.repeat(8) + '</tr>';
  </script>
</body>
</html>
